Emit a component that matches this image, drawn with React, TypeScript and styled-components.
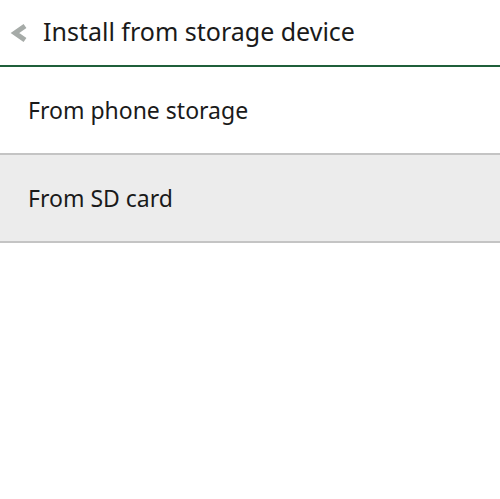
import React from 'react';
import styled, { createGlobalStyle } from 'styled-components';

const GlobalStyle = createGlobalStyle`
  html, body {
    margin: 0;
    padding: 0;
    background: #ffffff;
    font-family: 'Noto Sans', 'DejaVu Sans', sans-serif;
  }
`;

const Screen = styled.div`
  width: 500px;
  height: 499px;
  background: #ffffff;
  display: flex;
  flex-direction: column;
`;

const Header = styled.div`
  height: 67px;
  display: flex;
  align-items: center;
  gap: 14px;
  padding-left: 9px;
  border-bottom: 2px solid #1f5f3a;
  box-sizing: border-box;
`;

const BackIcon = styled.svg`
  width: 20px;
  height: 20px;
  flex-shrink: 0;
  margin-top: 1px;
`;

const Title = styled.div`
  font-size: 25px;
  color: #1a1a1a;
  margin-top: -4px;
`;

const Row = styled.div<{ $active?: boolean }>`
  height: 88px;
  box-sizing: border-box;
  display: flex;
  align-items: center;
  padding-left: 28px;
  background: ${p => (p.$active ? '#ececec' : '#ffffff')};
  border-bottom: 2px solid #c4c4c4;
  font-size: 23px;
  color: #1a1a1a;
`;

const options = [
  { label: 'From phone storage', active: false },
  { label: 'From SD card', active: true },
];

export default function App() {
  return (
    <Screen>
      <GlobalStyle />
      <Header>
        <BackIcon viewBox="0 0 20 20">
          <path d="M16 3 L6 10 L16 17" fill="none" stroke="#a6aba8" strokeWidth="5" strokeLinejoin="miter" />
        </BackIcon>
        <Title>Install from storage device</Title>
      </Header>
      {options.map(o => (
        <Row key={o.label} $active={o.active}>
          {o.label}
        </Row>
      ))}
    </Screen>
  );
}
